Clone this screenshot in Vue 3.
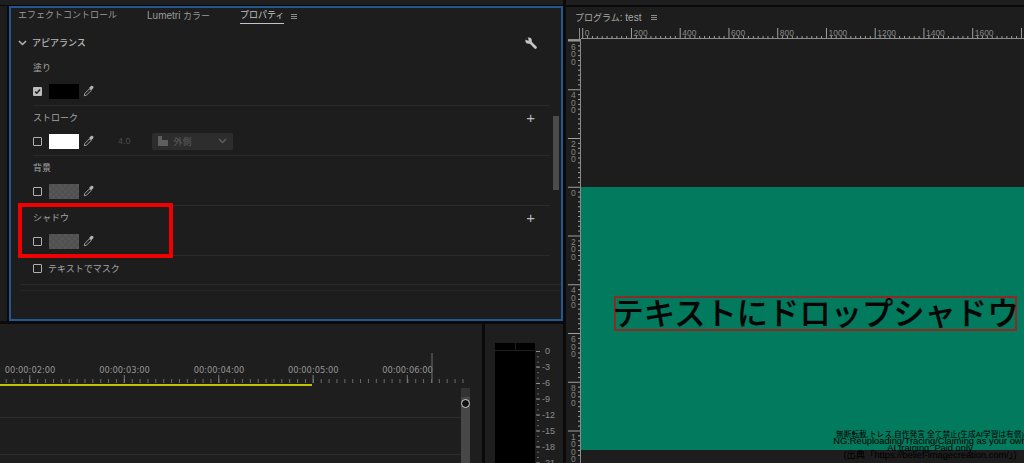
<script setup>
import { computed } from 'vue'

// preview rulers: 200 units = 48.75px, ten divisions each
const step = 48.75
const hMajors = computed(() =>
  Array.from({ length: 10 }, (_, i) => ({ x: 1.2 + i * step, label: i * 200 }))
)
const hMinors = computed(() => {
  const out = []
  for (let i = 0; i < 94; i++) if (i % 10) out.push(1.2 + (i * step) / 10)
  return out
})
const vLabels = ['600', '400', '200', '0', '200', '400', '600', '800', '1000']
const vMajors = computed(() =>
  vLabels.map((label, i) => ({ y: 1.5 + i * step, digits: label.split('') }))
)
const vMinors = computed(() => {
  const out = []
  for (let i = 0; i < 86; i++) if (i % 10) out.push(1.5 + (i * step) / 10)
  return out
})

// timeline ruler
const timeLabels = ['00:00:02:00', '00:00:03:00', '00:00:04:00', '00:00:05:00', '00:00:06:00']
const timeMajors = [29.3, 123.8, 218.3, 312.6, 406.8]
const timeMinors = computed(() => {
  const out = []
  for (let x = 5.7; x < 463; x += 7.875) out.push(x)
  return out
})

// audio meter scale
const meterMarks = [
  { y: 27, label: '0', x: 12 },
  { y: 42.5, label: '-3', x: 9 },
  { y: 59, label: '-6', x: 9 },
  { y: 74.5, label: '-9', x: 9 },
  { y: 90.5, label: '-12', x: 9 },
  { y: 106.5, label: '-15', x: 9 },
  { y: 122.5, label: '-18', x: 9 },
  { y: 138.5, label: '-21', x: 9 },
]
const meterDots = computed(() =>
  Array.from({ length: 24 }, (_, i) => 27 + i * 5.3)
)
</script>

<template>
  <div class="app">
    <div class="left-col">
      <div class="top-row">
        <div class="stub" />
        <section class="props">
          <header class="tabs">
            <span class="tab">エフェクトコントロール</span>
            <span class="tab"><span class="latin">Lumetri</span> カラー</span>
            <span class="tab tab--active">プロパティ</span>
            <span class="menu"><i /><i /><i /></span>
          </header>

          <div class="group-head">
            <svg class="chevron" width="9" height="6" viewBox="0 0 9 6">
              <path d="M1 1l3.5 3.5L8 1" fill="none" stroke="#b5b5b5" stroke-width="1.5" />
            </svg>
            <span class="group-title">アピアランス</span>
            <svg class="wrench" width="12" height="12" viewBox="0 0 12 12">
              <circle cx="3.6" cy="3.6" r="3.2" fill="#c4c4c4" />
              <path d="M0 2.6L2.600 0 4 4z" fill="#1d1d1d" />
              <path d="M4.500 4.500l6 6" stroke="#c4c4c4" stroke-width="2.600" stroke-linecap="round" />
            </svg>
          </div>

          <div class="section">
            <div class="section-label">塗り</div>
            <div class="section-row">
              <span class="check check--on">
                <svg width="7" height="7" viewBox="0 0 7 7"><path d="M1 3.500l1.800 1.800L6 1.500" fill="none" stroke="#1c1c1c" stroke-width="1.400" /></svg>
              </span>
              <span class="swatch swatch--black" />
              <svg class="dropper" width="12" height="12" viewBox="0 0 12 12">
                <path d="M1.300 10.700l.4-2.100 4.700-4.700 1.700 1.700-4.700 4.700z" fill="none" stroke="#a0a0a0" />
                <path d="M6 3l1-1 1-1c.7-.5 1.400-.4 2 .2.600.6.700 1.300.2 2l-1 1-1 1z" fill="#b4b4b4" />
              </svg>
            </div>
          </div>

          <div class="section">
            <div class="section-label">ストローク<span class="plus">+</span></div>
            <div class="section-row">
              <span class="check" />
              <span class="swatch swatch--white" />
              <svg class="dropper" width="12" height="12" viewBox="0 0 12 12">
                <path d="M1.300 10.700l.4-2.100 4.700-4.700 1.700 1.700-4.700 4.700z" fill="none" stroke="#a0a0a0" />
                <path d="M6 3l1-1 1-1c.7-.5 1.400-.4 2 .2.600.6.700 1.300.2 2l-1 1-1 1z" fill="#b4b4b4" />
              </svg>
              <span class="stroke-width">4.0</span>
              <span class="select">
                <svg width="10" height="10" viewBox="0 0 10 10"><path d="M0 0h4v4h6v6H0z" fill="#5e5e5e" /></svg>
                <span class="select-text">外側</span>
                <svg class="select-arrow" width="9" height="6" viewBox="0 0 9 6"><path d="M1 1l3.500 3.500L8 1" fill="none" stroke="#5e5e5e" stroke-width="1.400" /></svg>
              </span>
            </div>
          </div>

          <div class="section">
            <div class="section-label">背景</div>
            <div class="section-row">
              <span class="check" />
              <span class="swatch swatch--gray" />
              <svg class="dropper" width="12" height="12" viewBox="0 0 12 12">
                <path d="M1.300 10.700l.4-2.100 4.700-4.700 1.700 1.700-4.700 4.700z" fill="none" stroke="#a0a0a0" />
                <path d="M6 3l1-1 1-1c.7-.5 1.400-.4 2 .2.600.6.700 1.300.2 2l-1 1-1 1z" fill="#b4b4b4" />
              </svg>
            </div>
          </div>

          <div class="section">
            <div class="section-label">シャドウ<span class="plus">+</span></div>
            <div class="section-row">
              <span class="check" />
              <span class="swatch swatch--gray" />
              <svg class="dropper" width="12" height="12" viewBox="0 0 12 12">
                <path d="M1.300 10.700l.4-2.100 4.700-4.700 1.700 1.700-4.700 4.700z" fill="none" stroke="#a0a0a0" />
                <path d="M6 3l1-1 1-1c.7-.5 1.400-.4 2 .2.600.6.700 1.300.2 2l-1 1-1 1z" fill="#b4b4b4" />
              </svg>
            </div>
          </div>

          <div class="mask-row">
            <span class="check" />
            <span class="mask-label">テキストでマスク</span>
          </div>
          <div class="end-line" />

          <div class="scroll-thumb" />
          <div class="callout" />
        </section>
      </div>

      <div class="bottom-row">
        <section class="timeline">
          <svg class="time-ruler" width="482" height="62" viewBox="0 0 482 62">
            <text v-for="(t, i) in timeLabels" :key="t" :x="timeMajors[i] + 0.7" y="48.500" text-anchor="middle" class="time-label">{{ t }}</text>
            <rect v-for="x in timeMinors" :key="x" :x="x" y="55" width="1" height="4" fill="#6a6a6a" />
            <rect v-for="x in timeMajors" :key="x" :x="x" y="51" width="1" height="8" fill="#7c7c7c" />
            <rect x="431.500" y="29" width="1" height="30" fill="#6e6e6e" />
            <rect x="0" y="60" width="312" height="2" fill="#c2c200" />
          </svg>
          <div class="tracks">
            <div class="track-lines">
              <div class="track-line" />
              <div class="track-line" />
            </div>
            <div class="track-scroll"><span class="knob" /></div>
          </div>
        </section>

        <section class="meter-panel">
          <div class="meter">
            <div class="meter-head"><span /><span /></div>
            <div class="meter-body" />
          </div>
          <svg class="meter-scale" width="28" height="140" viewBox="0 0 28 140">
            <rect v-for="y in meterDots" :key="y" x="1" :y="y" width="2" height="1" fill="#6a6a6a" />
            <template v-for="m in meterMarks" :key="m.label">
              <rect x="0" :y="m.y" width="4" height="1" fill="#8a8a8a" />
              <text :x="m.x - 3" :y="m.y + 3" class="meter-label">{{ m.label }}</text>
            </template>
          </svg>
        </section>
      </div>
    </div>

    <section class="program">
      <div class="top-strip" />
      <header class="program-head">
        <span class="program-title">プログラム<span class="latin">: test</span></span>
        <span class="menu"><i /><i /><i /></span>
      </header>
      <div class="monitor">
        <svg class="corner" width="15" height="11" viewBox="0 0 15 11">
          <rect x="13" y="0" width="1" height="11" fill="#8c8c8c" />
        </svg>
        <svg class="h-ruler" width="443" height="11" viewBox="0 0 443 11">
          <template v-for="m in hMajors" :key="m.x">
            <rect :x="m.x" y="0" width="1" height="10" fill="#a0a0a0" />
            <text :x="m.x + 2.500" y="7.500" class="ruler-label">{{ m.label }}</text>
          </template>
          <rect v-for="x in hMinors" :key="x" :x="x" y="8" width="1" height="2" fill="#a0a0a0" />
          <rect x="0" y="10" width="443" height="1" fill="#8c8c8c" />
        </svg>
        <svg class="v-ruler" width="15" height="424" viewBox="0 0 15 424">
          <rect x="2" y="0" width="12" height="2" fill="#8c8c8c" />
          <template v-for="m in vMajors" :key="m.y">
            <rect x="2" :y="m.y" width="12" height="1" fill="#a0a0a0" />
            <text v-for="(d, i) in m.digits" :key="i" x="5" :y="m.y + 9 + i * 7.500" class="ruler-digit">{{ d }}</text>
          </template>
          <rect v-for="y in vMinors" :key="y" x="12" :y="y" width="2" height="1" fill="#a0a0a0" />
          <rect x="14" y="0" width="1" height="424" fill="#8c8c8c" />
        </svg>
        <div class="canvas">
          <div class="stage">
            <div class="title-box">テキストにドロップシャドウ</div>
          </div>
          <div class="credit">
            <div class="credit-first">無断転載,トレス,自作発言 全て禁止(生成AI学習は有償)</div>
            <div>NG:Reuploading/Tracing/Claiming as your own</div>
            <div>AI training: Paid only</div>
            <div>(出典「https://belief-imagecreation.com/」)</div>
          </div>
        </div>
      </div>
    </section>
  </div>
</template>

<style scoped>
.app {
  width: 1024px;
  height: 463px;
  display: flex;
  gap: 3px;
  overflow: hidden;
  background: #0a0a0a;
  color: #a4a4a4;
  font-family: "Liberation Sans", "Noto Sans CJK JP", sans-serif;
  font-size: 9px;
}

.latin {
  font-size: 10px;
}

/* ── Left column ── */
.left-col {
  width: 563px;
  display: flex;
  flex-direction: column;
  gap: 3px;
  flex: none;
  border-top: 5px solid #1e1e1e;
}

.top-row {
  height: 315px;
  display: flex;
  gap: 2px;
  padding-top: 1px;
}

.stub {
  width: 7px;
  background: #1d1d1d;
}

.props {
  position: relative;
  flex: 1;
  display: flex;
  flex-direction: column;
  background: #1d1d1d;
  border: 2px solid #24578f;
}

.tabs {
  height: 24px;
  flex: none;
  display: flex;
  align-items: flex-start;
  padding: 1px 0 0 7px;
}

.tab {
  line-height: 13px;
  margin-right: 30px;
  padding-bottom: 1px;
  color: #9a9a9a;
}

.tab--active {
  margin-right: 7px;
  color: #c4c4c4;
  border-bottom: 1px solid #c4c4c4;
}

.menu {
  display: inline-flex;
  flex-direction: column;
  gap: 1px;
  width: 6px;
  margin-top: 5px;
}

.menu i {
  display: block;
  height: 1px;
  background: #8a8a8a;
}

.group-head {
  height: 23px;
  box-sizing: border-box;
  flex: none;
  display: flex;
  align-items: center;
  padding: 0 24px 4px 7px;
}

.chevron {
  margin-right: 5px;
}

.group-title {
  flex: 1;
  font-weight: 500;
  color: #b4b4b4;
}

.section {
  height: 50px;
  box-sizing: border-box;
  flex: none;
  margin: 0 11px 0 22px;
  border-bottom: 1px solid #2a2a2a;
}

.section-label {
  height: 22px;
  display: flex;
  align-items: center;
  justify-content: space-between;
  padding-right: 15px;
}

.plus {
  font-size: 15px;
  line-height: 1;
  color: #bcbcbc;
}

.section-row {
  height: 26px;
  display: flex;
  align-items: center;
}

.check {
  width: 9px;
  height: 9px;
  box-sizing: border-box;
  flex: none;
  display: flex;
  align-items: center;
  justify-content: center;
  border: 1.500px solid #b0b0b0;
  border-radius: 1px;
}

.check--on {
  background: #bdbdbd;
  border: 0;
}

.swatch {
  width: 30px;
  height: 15px;
  flex: none;
  margin: 0 4px 0 7px;
}

.swatch--black {
  background: #000;
}

.swatch--white {
  background: #fff;
}

.swatch--gray {
  background: repeating-conic-gradient(#565656 0 25%, #505050 0 50%) 0 0 / 6px 6px;
}

.stroke-width {
  margin-left: 23px;
  color: #4c4c4c;
}

.select {
  width: 81px;
  height: 17px;
  margin-left: 21px;
  padding: 0 6px;
  box-sizing: border-box;
  display: flex;
  align-items: center;
  background: #2d2d2d;
  border-radius: 2px;
  color: #5e5e5e;
}

.select-text {
  margin-left: 6px;
  flex: 1;
}

.mask-row {
  height: 28px;
  box-sizing: border-box;
  padding-bottom: 4px;
  flex: none;
  display: flex;
  align-items: center;
  margin-left: 22px;
}

.mask-label {
  margin-left: 6px;
}

.end-line {
  height: 5px;
  flex: none;
  margin-left: 9px;
  border-top: 1px solid #2a2a2a;
  border-bottom: 1px solid #252525;
}

.scroll-thumb {
  position: absolute;
  left: 542px;
  top: 108px;
  width: 6px;
  height: 74px;
  background: #4b4b4b;
}

.callout {
  position: absolute;
  left: 7px;
  top: 195px;
  width: 155px;
  height: 55px;
  box-sizing: border-box;
  border: 4px solid #f00000;
}

/* ── Timeline ── */
.bottom-row {
  flex: 1;
  min-height: 0;
  display: flex;
  gap: 3px;
}

.timeline {
  width: 482px;
  flex: none;
  display: flex;
  flex-direction: column;
  background: #1e1e1e;
}

.time-ruler {
  flex: none;
  display: block;
}

.time-label {
  font-family: "DejaVu Sans", sans-serif;
  font-size: 8.300px;
  fill: #959595;
}

.tracks {
  flex: 1;
  min-height: 0;
  display: flex;
  margin-top: 2px;
}

.track-lines {
  width: 461px;
  flex: none;
  padding-top: 29px;
}

.track-line {
  height: 37px;
  box-sizing: border-box;
  border-top: 1px solid #2c2c2c;
}

.track-scroll {
  position: relative;
  width: 9px;
  flex: none;
  background: linear-gradient(#333 0 9px, #474747 9px);
}

.knob {
  position: absolute;
  left: 0;
  top: 11px;
  width: 9px;
  height: 9px;
  box-sizing: border-box;
  border: 1.500px solid #cfcfcf;
  border-radius: 50%;
  background: #111;
}

/* ── Meter ── */
.meter-panel {
  flex: 1;
  display: flex;
  background: #1e1e1e;
  padding-left: 10px;
  overflow: hidden;
}

.meter {
  width: 40px;
  flex: none;
  display: flex;
  flex-direction: column;
  padding-top: 19px;
}

.meter-head {
  height: 7px;
  flex: none;
  display: flex;
  gap: 1px;
  border-bottom: 1px solid #1e1e1e;
}

.meter-head span {
  flex: 1;
  background: #000;
}

.meter-body {
  flex: 1;
  background: #000;
}

.meter-scale {
  flex: none;
  margin-left: 1px;
}

.meter-label {
  font-size: 9px;
  fill: #8c8c8c;
}

/* ── Program monitor ── */
.program {
  flex: 1;
  min-width: 0;
  display: flex;
  flex-direction: column;
}

.top-strip {
  height: 5px;
  flex: none;
  background: #1e1e1e;
  border-bottom: 2px solid #0a0a0a;
}

.program-head {
  height: 21px;
  flex: none;
  display: flex;
  align-items: center;
  gap: 10px;
  padding-left: 9px;
  background: #1d1d1d;
}

.program-head .menu {
  margin-top: 0;
}

.program-title {
  color: #a8a8a8;
}

.monitor {
  flex: 1;
  min-height: 0;
  display: grid;
  grid-template-columns: 15px 1fr;
  grid-template-rows: 11px 1fr;
  background: #1d1d1d;
}

.corner,
.h-ruler,
.v-ruler {
  display: block;
}

.ruler-label {
  font-size: 8.500px;
  fill: #868686;
}

.ruler-digit {
  font-size: 8.500px;
  fill: #868686;
}

.canvas {
  position: relative;
  overflow: hidden;
  padding-top: 148px;
}

.stage {
  width: 469px;
  height: 263px;
  box-sizing: border-box;
  padding-bottom: 11px;
  display: flex;
  align-items: center;
  justify-content: center;
  background: #017a5d;
}

.title-box {
  width: 403px;
  height: 35px;
  box-sizing: border-box;
  flex: none;
  display: flex;
  justify-content: center;
  border: 2px solid #8f2a22;
  font-family: "Noto Sans CJK JP", sans-serif;
  font-size: 31.300px;
  font-weight: 500;
  line-height: 28px;
  white-space: nowrap;
  color: #050505;
  -webkit-text-stroke: 0.2px #050505;
}

.credit {
  position: absolute;
  left: 249px;
  top: 392px;
  width: 200px;
  display: flex;
  flex-direction: column;
  align-items: center;
  white-space: nowrap;
  font-size: 9.300px;
  line-height: 7px;
  color: #000;
}

.credit-first {
  font-size: 7.700px;
}
</style>

<style>
html,
body {
  background: #0a0a0a;
}
</style>
